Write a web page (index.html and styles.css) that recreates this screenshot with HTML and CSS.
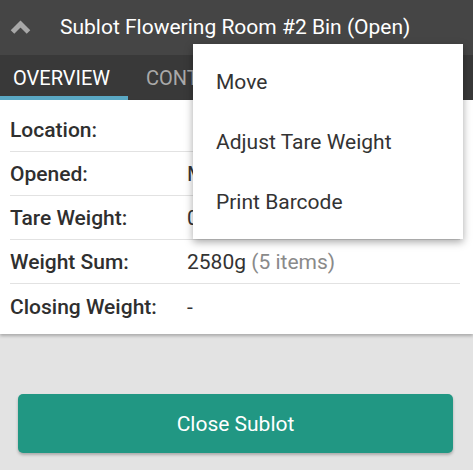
FILE: index.html
```html
<!DOCTYPE html>
<html>
<head>
<meta charset="utf-8">
<link rel="stylesheet" href="styles.css">
</head>
<body>
<div class="page">
  <header class="topbar">
    <svg class="chev" width="21" height="15" viewBox="0 0 21 15"><path d="M2.5 12 L10.5 4 L18.5 12" fill="none" stroke="#a8a8a8" stroke-width="5"/></svg>
    <div class="title">Sublot Flowering Room #2 Bin (Open)</div>
  </header>
  <nav class="tabs">
    <div class="tab active">OVERVIEW</div>
    <div class="tab">CONTENTS</div>
  </nav>
  <section class="panel">
    <div class="row"><div class="lbl">Location:</div><div class="val"></div></div>
    <div class="row"><div class="lbl">Opened:</div><div class="val">Mar 2</div></div>
    <div class="row"><div class="lbl">Tare Weight:</div><div class="val">0g</div></div>
    <div class="row"><div class="lbl">Weight Sum:</div><div class="val">2580g <span class="muted">(5 items)</span></div></div>
    <div class="row"><div class="lbl">Closing Weight:</div><div class="val">-</div></div>
  </section>
  <div class="actions">
    <button class="btn">Close Sublot</button>
  </div>
  <div class="menu">
    <div class="item">Move</div>
    <div class="item">Adjust Tare Weight</div>
    <div class="item">Print Barcode</div>
  </div>
</div>
</body>
</html>
```
FILE: styles.css
```css
* { box-sizing: border-box; }
html, body { margin: 0; padding: 0; }
body {
  font-family: Roboto, "Liberation Sans", sans-serif;
  background: #e3e3e3;
  width: 473px;
  height: 470px;
  overflow: hidden;
}
.page { position: relative; height: 470px; }
.topbar {
  height: 55px;
  background: #454545;
  display: flex;
  align-items: center;
  padding-left: 10px;
}
.chev { margin-right: 29px; margin-top: -1px; }
.title { color: #fff; font-size: 21px; margin-top: -1px; white-space: nowrap; }
.tabs {
  height: 45px;
  background: #393939;
  display: flex;
  overflow: hidden;
}
.tab {
  color: #a9a9a9;
  font-size: 20px;
  padding: 11px 0 0 13px;
  width: 128px;
  flex: none;
  white-space: nowrap;
  text-transform: uppercase;
}
.tab.active { color: #fff; border-bottom: 4px solid #5aa8c4; }
.tab + .tab { padding-left: 18px; width: 200px; }
.panel {
  background: #fff;
  padding: 8px 0 6px;
  box-shadow: 0 2px 3px rgba(0,0,0,0.25);
}
.row {
  margin: 0 13px 0 10px;
  height: 44px;
  display: flex;
  align-items: center;
  border-bottom: 1px solid #e2e2e2;
  font-size: 21px;
  color: #333;
  padding-top: 1px;
}
.row:last-child { border-bottom: none; }
.lbl { width: 177px; font-weight: 500; color: #2f2f2f; }
.val { color: #333; }
.muted { color: #8a8a8a; }
.actions { padding: 60px 20px 0 18px; }
.btn {
  width: 435px;
  height: 59px;
  border: none;
  border-radius: 5px;
  background: #219783;
  color: #fff;
  font-family: Roboto, "Liberation Sans", sans-serif;
  font-size: 21px;
  box-shadow: 0 2px 3px rgba(0,0,0,0.25);
  padding-top: 2px;
}
.menu {
  position: absolute;
  left: 193px;
  top: 44px;
  width: 270px;
  height: 195px;
  background: #fff;
  box-shadow: 0 3px 8px rgba(0,0,0,0.35);
  padding-top: 8px;
}
.item {
  height: 60px;
  display: flex;
  align-items: center;
  padding-left: 23px;
  font-size: 21px;
  color: #333;
}
```
